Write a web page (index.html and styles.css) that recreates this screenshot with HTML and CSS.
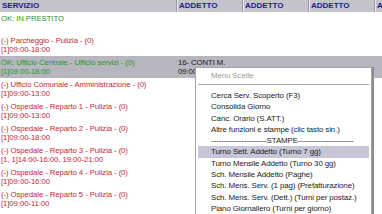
FILE: index.html
```html
<!DOCTYPE html>
<html>
<head>
<meta charset="utf-8">
<link rel="stylesheet" href="styles.css">
</head>
<body>
<div class="grid">
  <div class="head">
    <div class="hc c1">SERVIZIO</div>
    <div class="hc">ADDETTO</div>
    <div class="hc">ADDETTO</div>
    <div class="hc">ADDETTO</div>
    <div class="hc last">ADDETTO</div>
  </div>
  <div class="row">
    <div class="cell c1 ok"><div class="ln">OK: IN PRESTITO</div><div class="ln">&nbsp;</div></div>
  </div>
  <div class="row">
    <div class="cell c1 ko"><div class="ln">(-) Parcheggio - Pulizia - (0)</div><div class="ln">[1]09:00-18:00</div></div>
  </div>
  <div class="row sel">
    <div class="cell c1 ok"><div class="ln">OK: Ufficio Centrale - Ufficio servizi - (0)</div><div class="ln">[1]09:00-18:00</div></div>
    <div class="cell"><div class="ln">16- CONTI M.</div><div class="ln">09:00-18:00</div></div>
  </div>
  <div class="row">
    <div class="cell c1 ko"><div class="ln">(-) Ufficio Comunale - Amministrazione - (0)</div><div class="ln">[1]09:00-13:00</div></div>
  </div>
  <div class="row">
    <div class="cell c1 ko"><div class="ln">(-) Ospedale - Reparto 1 - Pulizia - (0)</div><div class="ln">[1]09:00-13:00</div></div>
  </div>
  <div class="row">
    <div class="cell c1 ko"><div class="ln">(-) Ospedale - Reparto 2 - Pulizia - (0)</div><div class="ln">[1]09:00-18:00</div></div>
  </div>
  <div class="row">
    <div class="cell c1 ko"><div class="ln">(-) Ospedale - Reparto 3 - Pulizia - (0)</div><div class="ln">[1, 1]14:00-16:00, 19:00-21:00</div></div>
  </div>
  <div class="row">
    <div class="cell c1 ko"><div class="ln">(-) Ospedale - Reparto 4 - Pulizia - (0)</div><div class="ln">[1]09:00-16:00</div></div>
  </div>
  <div class="row">
    <div class="cell c1 ko"><div class="ln">(-) Ospedale - Reparto 5 - Pulizia - (0)</div><div class="ln">[1]09:00-11:00</div></div>
  </div>
</div>

<div class="menu">
  <div class="mtitle">Menu Scelte</div>
  <div class="msep"></div>
  <div class="mi">Cerca Serv. Scoperto (F3)</div>
  <div class="mi">Consolida Giorno</div>
  <div class="mi">Canc. Orario (S.ATT.)</div>
  <div class="mi">Altre funzioni e stampe (clic tasto sin.)</div>
  <div class="mi">----------------------STAMPE----------------------</div>
  <div class="mi hi">Turno Sett. Addetto (Turno 7 gg)</div>
  <div class="mi">Turno Mensile Addetto (Turno 30 gg)</div>
  <div class="mi">Sch. Mensile Addetto (Paghe)</div>
  <div class="mi">Sch. Mens. Serv. (1 pag) (Prefatturazione)</div>
  <div class="mi">Sch. Mens. Serv. (Dett.) (Turni per postaz.)</div>
  <div class="mi">Piano Giornaliero (Turni per giorno)</div>
</div>
</body>
</html>
```

FILE: styles.css
```css
html, body {
  margin: 0;
  padding: 0;
  background: #ffffff;
}
body {
  width: 382px;
  height: 214px;
  overflow: hidden;
  position: relative;
  font-family: "Liberation Sans", Arial, sans-serif;
  font-size: 7.8px;
  letter-spacing: -0.1px;
}
.grid {
  display: flex;
  flex-direction: column;
  width: 382px;
  overflow: hidden;
}
.head {
  display: flex;
  height: 12px;
  background: #c3c3cb;
}
.hc {
  width: 66px;
  flex: none;
  box-sizing: border-box;
  padding-left: 1px;
  border-left: 1px solid #e6e6ec;
  border-right: 1px solid #9a9aa4;
  color: #1b1b8e;
  font-weight: bold;
  font-size: 8px;
  line-height: 12px;
  letter-spacing: 0;
  white-space: nowrap;
  overflow: hidden;
}
.hc.c1 {
  width: 177px;
  border-left: none;
  padding-left: 2px;
}
.hc.last {
  width: 8px;
  border-right: none;
}
.row {
  display: flex;
  height: 22px;
}
.row.sel {
  background: #b6b6be;
}
.cell {
  width: 66px;
  flex: none;
  box-sizing: border-box;
  padding: 2px 0 0 1px;
  white-space: nowrap;
  overflow: hidden;
  color: #202020;
}
.cell.c1 {
  width: 177px;
}
.ln {
  height: 9px;
  line-height: 9px;
}
.ok { color: #2c962c; }
.ko { color: #c8283a; }

.menu {
  position: absolute;
  left: 195px;
  top: 67px;
  width: 177px;
  height: 147px;
  box-sizing: border-box;
  background: #ffffff;
  border: 1px solid #a4a4a8;
  border-bottom: none;
  box-shadow: 2px 0 0 #8c8c90;
  padding-top: 2px;
  overflow: hidden;
  font-size: 7.9px;
  color: #1a1a1a;
}
.mtitle {
  height: 11px;
  line-height: 11px;
  padding-left: 15px;
  color: #9c9c9c;
}
.msep {
  height: 0;
  margin: 3px 2px 4px 2px;
  border-top: 1px solid #a8a8a8;
  border-bottom: 1px solid #ffffff;
}
.mi {
  height: 11.3px;
  line-height: 11.3px;
  padding-left: 13px;
  margin: 0 2px;
  white-space: nowrap;
  overflow: hidden;
}
.mi.hi {
  background: #c6c6d6;
}
```
